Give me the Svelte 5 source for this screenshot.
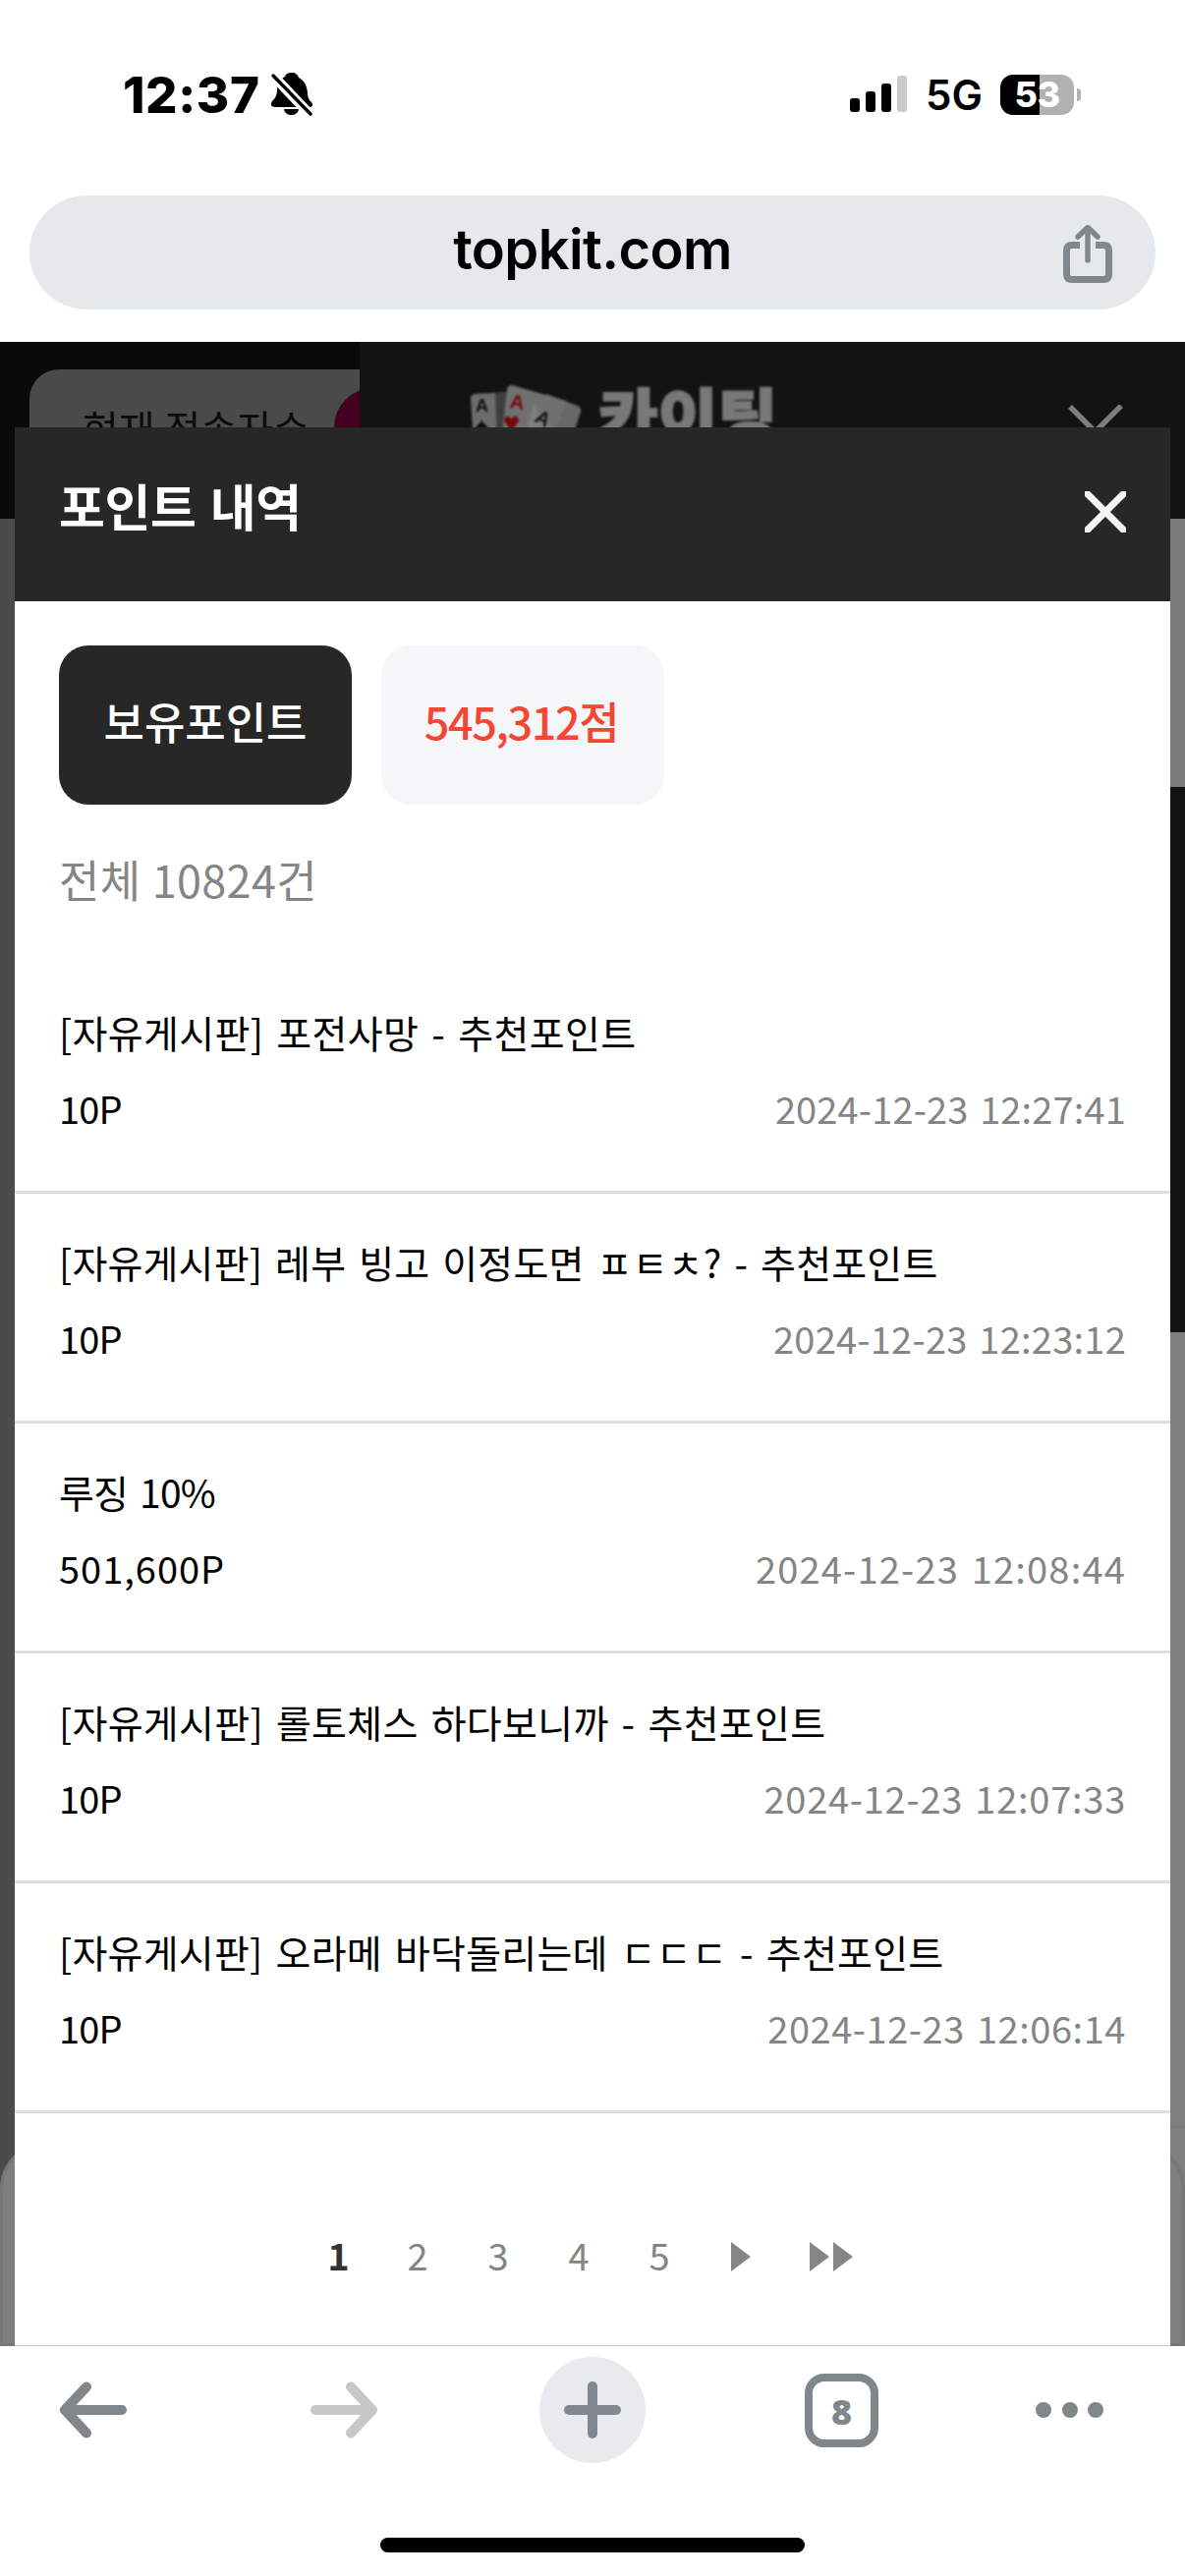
<script>
    let { total = 10824, held = 545312 } = $props();

    let rows = $state([
        { title: '[자유게시판] 포전사망 - 추천포인트', point: '10P', date: '2024-12-23 12:27:41', track: 0.35, pointTrack: -0.8, dateTrack: 0.15 },
        { title: '[자유게시판] 레부 빙고 이정도면 ㅍㅌㅊ? - 추천포인트', point: '10P', date: '2024-12-23 12:23:12', track: 0.2, pointTrack: -0.8, dateTrack: 0.25 },
        { title: '루징 10%', point: '501,600P', date: '2024-12-23 12:08:44', track: -0.8, pointTrack: 1, dateTrack: 1.2 },
        { title: '[자유게시판] 롤토체스 하다보니까 - 추천포인트', point: '10P', date: '2024-12-23 12:07:33', track: 0.3, pointTrack: -0.8, dateTrack: 0.75 },
        { title: '[자유게시판] 오라메 바닥돌리는데 ㄷㄷㄷ - 추천포인트', point: '10P', date: '2024-12-23 12:06:14', track: 0.25, pointTrack: -0.8, dateTrack: 0.55 }
    ]);

    let pages = [1, 2, 3, 4, 5];
    let currentPage = $state(1);
</script>

<div class="phone">
    <div class="status">
        <div class="status-left">
            <span class="clock">12:37</span>
            <svg class="bell" width="44" height="46" viewBox="0 0 44 46">
                <path d="M22 1c4 0 6 2 7 5 6 3 8 8 9 15 0 5 1 7 4 10 2 3 1 5-3 5H5c-4 0-5-3-3-6 4-4 5-7 5-12 1-7 4-11 8-13 1-3 3-4 7-4z" />
                <path d="M14 38h15c-1 8-14 8-15 0z" />
                <path d="M2 3l39 41" stroke="#fff" stroke-width="10" />
                <path d="M3 4l38 39" stroke="#000" stroke-width="3.4" stroke-linecap="round" />
            </svg>
        </div>
        <div class="status-right">
            <svg class="signal" width="58" height="38" viewBox="0 0 58 38">
                <rect x="0" y="23" width="10" height="14" rx="3" />
                <rect x="16" y="16" width="10" height="21" rx="3" />
                <rect x="32" y="8" width="10" height="29" rx="3" />
                <rect x="48" y="0" width="10" height="37" rx="3" fill="#cbcbcb" />
            </svg>
            <span class="network">5G</span>
            <div class="battery">53</div>
            <div class="battery-cap"></div>
        </div>
    </div>

    <div class="url-bar">
        <span>topkit.com</span>
        <svg class="share" width="50" height="60" viewBox="0 0 50 60" fill="none" stroke="#81888d" stroke-linecap="round">
            <path d="M17 20.500H9Q3.500 20.500 3.500 26V50Q3.500 55.500 9 55.500H41Q46.500 55.500 46.500 50V26Q46.500 20.500 41 20.500H33" stroke-width="7" stroke-linecap="butt" />
            <path d="M25 36V4M15 12L25 2.500 35 12" stroke-width="5.500" stroke-linejoin="round" />
        </svg>
    </div>

    <div class="page">
        <div class="backdrop">
            <div class="site-head">
                <div class="site-left">
                    <div class="visitors">현재 접속자수<i></i></div>
                </div>
                <div class="site-menu">
                    <svg class="cards" width="120" height="60" viewBox="0 0 120 60">
                        <path d="M3 15q0-3 4-4l32-2 4 51H6z" fill="#6c6c6c" />
                        <path d="M28 10l12-1v50H30z" fill="#3e3e3e" />
                        <path d="M80 11l32 12q4 2 3 6l-10 31H60z" fill="#686868" />
                        <path d="M40 6q1-4 5-4l55 16-14 42H34z" fill="#707070" />
                        <path d="M67 22l28 38H56z" fill="#7e7e7e" />
                        <text x="8" y="29" font-size="18" fill="#111">A</text>
                        <text x="7" y="53" font-size="27" fill="#111">♠</text>
                        <text x="43" y="26" font-size="20" fill="#740808" transform="rotate(8 50 20)">A</text>
                        <text x="36" y="50" font-size="29" fill="#740808">♥</text>
                        <text x="69" y="42" font-size="20" fill="#111" transform="rotate(28 75 36)">A</text>
                    </svg>
                    <span class="logo-text">카이팅</span>
                    <svg class="menu-close" width="56" height="56" viewBox="0 0 56 56" stroke="#7d7d7d" stroke-width="5.500">
                        <path d="M2 2l52 52M54 1L2 53" />
                    </svg>
                </div>
            </div>
            <div class="site-body">
                <div class="strip-left"><div class="card-left"></div></div>
                <div class="strip-right">
                    <div class="banner"></div>
                    <div class="rule"></div>
                    <div class="card-right"></div>
                </div>
            </div>
        </div>

        <div class="modal">
            <div class="modal-head">
                <h1>포인트 내역</h1>
                <svg width="42" height="42" viewBox="0 0 42 42" stroke="#f4f4f4" stroke-width="7">
                    <path d="M0 0l42 42M42 0L0 42" />
                </svg>
            </div>
            <div class="summary">
                <div class="held-label">보유포인트</div>
                <div class="held-value">{held.toLocaleString('en-US')}점</div>
            </div>
            <p class="total">전체 {total}건</p>

            <ul class="list">
                {#each rows as row}
                    <li>
                        <div class="title" style="letter-spacing: {row.track}px">{row.title}</div>
                        <div class="meta">
                            <span class="point" style="letter-spacing: {row.pointTrack}px">{row.point}</span>
                            <span class="date" style="letter-spacing: {row.dateTrack}px">{row.date}</span>
                        </div>
                    </li>
                {/each}
            </ul>

            <div class="pages">
                {#each pages as page}
                    <button class:active={page === currentPage} onclick={() => (currentPage = page)}>{page}</button>
                {/each}
                <svg class="next" width="21" height="30" viewBox="0 0 21 30"><path d="M1 0L21 15 1 30z" fill="#858585" /></svg>
                <svg class="last" width="44" height="30" viewBox="0 0 44 30"><path d="M0 0l20 15L0 30zM24 0l20 15-20 15z" fill="#858585" /></svg>
            </div>
        </div>
    </div>

    <div class="toolbar">
        <svg class="back" width="70" height="60" viewBox="0 0 70 60" stroke="#80868a">
            <path d="M64 30H7M28 6.500L6 30l22 23.500" />
        </svg>
        <svg class="forward" width="70" height="60" viewBox="0 0 70 60" stroke="#c8c8c8">
            <path d="M6 30h57M42 6.500L64 30 42 53.500" />
        </svg>
        <div class="plus">
            <svg width="60" height="60" viewBox="0 0 60 60" stroke="#81888f">
                <path d="M6 30h48M30 6v48" />
            </svg>
        </div>
        <div class="tabs">8</div>
        <div class="dots"><i></i><i></i><i></i></div>
    </div>
    <div class="home-indicator"></div>
</div>

<style>
    :global(body) {
        margin: 0;
        background: #fff;
    }

    .phone {
        display: flex;
        flex-direction: column;
        width: 1206px;
        height: 2622px;
        overflow: hidden;
        background: #fff;
        color: #000;
        font-family: 'Noto Sans CJK KR', 'Noto Sans', sans-serif;
    }

    .status {
        display: flex;
        justify-content: space-between;
        height: 118px;
        padding: 73px 106px 0 125px;
        box-sizing: border-box;
        margin-bottom: 81px;
        font-family: Inter, sans-serif;
    }

    .status-left,
    .status-right {
        display: flex;
        align-items: center;
        height: 46px;
    }

    .clock {
        width: 150px;
        font-size: 51px;
        font-weight: 800;
        letter-spacing: 0.6px;
        white-space: nowrap;
    }

    .network {
        width: 55px;
        margin: 1px 21px 0 19px;
        font-size: 42px;
        font-weight: 600;
        letter-spacing: 0;
    }

    .battery {
        width: 75px;
        height: 41px;
        border-radius: 13px;
        background: linear-gradient(to right, #000 40px, #b1b1b1 40px);
        color: #fff;
        font-size: 36px;
        font-weight: 800;
        letter-spacing: -0.5px;
        line-height: 41px;
        text-align: center;
    }

    .battery-cap {
        width: 4px;
        height: 13px;
        margin-left: 3px;
        border-radius: 0 5px 5px 0;
        background: #b1b1b1;
    }

    .url-bar {
        position: relative;
        height: 116px;
        margin: 0 30px 33px;
        border-radius: 58px;
        background: #e5e9ec;
        font-family: Inter, sans-serif;
        font-size: 56px;
        font-weight: 600;
        letter-spacing: -0.6px;
        line-height: 110px;
        text-align: center;
    }

    .share {
        position: absolute;
        right: 44px;
        top: 30px;
    }

    .page {
        display: grid;
        height: 2040px;
        overflow: hidden;
        flex-shrink: 0;
    }

    .backdrop,
    .modal {
        grid-area: 1 / 1;
        min-height: 0;
    }

    .backdrop {
        display: flex;
        flex-direction: column;
    }

    .site-head {
        display: flex;
        height: 180px;
    }

    .site-left {
        width: 366px;
        box-sizing: border-box;
        padding: 28px 0 0 30px;
        overflow: hidden;
        background: #0a0a0a;
    }

    .visitors {
        display: flex;
        align-items: center;
        width: 420px;
        height: 118px;
        box-sizing: border-box;
        padding-left: 54px;
        border-radius: 30px;
        background: #4a4a4a;
        color: #0b0b0b;
        font-size: 40px;
        line-height: 118px;
        word-spacing: 1px;
    }

    .visitors i {
        width: 80px;
        height: 80px;
        flex-shrink: 0;
        margin-left: 25px;
        border-radius: 50%;
        background: #430020;
    }

    .site-menu {
        display: flex;
        flex: 1;
        background: #131313;
    }

    .cards {
        margin: 42px 0 0 110px;
        font-family: 'Liberation Sans', 'DejaVu Sans', sans-serif;
        font-weight: 700;
        filter: blur(0.9px);
    }

    .logo-text {
        width: 350px;
        margin: 39px 0 0 13px;
        color: #787878;
        font-size: 66px;
        font-weight: 900;
        line-height: 70px;
        -webkit-text-stroke: 2px #787878;
        transform: scaleY(0.92);
        transform-origin: top;
        filter: blur(1.2px);
    }

    .menu-close {
        margin: 64px 0 0 128px;
    }

    .site-body {
        display: flex;
        justify-content: space-between;
        flex: 1;
    }

    .strip-left {
        display: flex;
        align-items: flex-end;
        width: 15px;
        overflow: hidden;
        background: #4b4b4b;
    }

    .card-left {
        width: 300px;
        height: 208px;
        box-sizing: border-box;
        flex-shrink: 0;
        border: 3px solid #767676;
        border-radius: 48px 0 0 0;
        background: #7f7f7f;
    }

    .strip-right {
        display: flex;
        flex-direction: column;
        align-items: flex-end;
        width: 15px;
        overflow: hidden;
        background: #7f7f7f;
    }

    .banner {
        width: 15px;
        height: 555px;
        border-top: 273px solid #7b7b7b;
        background: #131313;
    }

    .rule {
        width: 15px;
        height: 3px;
        margin: 807px 0 14px;
        background: #7a7a7a;
    }

    .card-right {
        width: 300px;
        flex: 1;
        box-sizing: border-box;
        border: 3px solid #767676;
        border-radius: 0 48px 0 0;
    }

    .modal {
        margin: 87px 15px 0;
        background: #fff;
        z-index: 1;
        border-bottom: 1px solid #c8c8c8;
    }

    .modal-head {
        display: flex;
        align-items: center;
        justify-content: space-between;
        height: 177px;
        padding: 0 45px 5px;
        box-sizing: border-box;
        background: #272727;
    }

    h1 {
        margin: 0 0 14px;
        color: #fff;
        font-size: 51px;
        font-weight: 600;
        letter-spacing: -0.4px;
        line-height: 60px;
        word-spacing: 3px;
    }

    .summary {
        display: flex;
        gap: 30px;
        padding: 45px 45px 0;
    }

    .held-label,
    .held-value {
        height: 162px;
        border-radius: 30px;
        font-size: 45px;
        font-weight: 500;
        line-height: 153px;
        text-align: center;
        white-space: nowrap;
    }

    .held-label {
        width: 298px;
        background: #272727;
        color: #fff;
    }

    .held-value {
        width: 288px;
        box-sizing: border-box;
        padding-right: 3px;
        background: #f4f6f8;
        color: #f44634;
        letter-spacing: -1.4px;
    }

    .total {
        margin: 46px 45px 56px;
        color: #858585;
        font-size: 45px;
        letter-spacing: 0.3px;
        line-height: 60px;
        word-spacing: 1px;
    }

    .list {
        margin: 0;
        padding: 0;
        list-style: none;
    }

    .list li {
        height: 234px;
        padding: 39px 45px 0;
        box-sizing: border-box;
        border-bottom: 3px solid #ddd;
    }

    .title {
        font-size: 39px;
        line-height: 60px;
        white-space: pre;
        word-spacing: 4px;
    }

    .meta {
        display: flex;
        justify-content: space-between;
        margin-top: 18px;
        font-size: 38px;
        line-height: 60px;
    }

    .date {
        color: #858585;
        word-spacing: 3px;
    }

    .pages {
        display: flex;
        align-items: center;
        height: 60px;
        margin: 116px 0 0 287px;
    }

    .pages button {
        width: 82px;
        padding: 0 0 4px;
        border: none;
        background: none;
        color: #858585;
        font: inherit;
        font-size: 38px;
        line-height: 60px;
        text-align: center;
    }

    .pages .active {
        padding-left: 3px;
        color: #333;
        font-weight: 700;
    }

    .next {
        margin-left: 31px;
    }

    .last {
        margin-left: 60px;
    }

    .toolbar {
        display: flex;
        align-items: center;
        height: 108px;
        margin-top: 11px;
        padding-left: 60px;
        flex-shrink: 0;
    }

    .toolbar svg {
        fill: none;
        stroke-width: 10;
        stroke-linecap: round;
        stroke-linejoin: round;
    }

    .forward {
        margin: 0 164px 0 185px;
    }

    .plus {
        display: flex;
        align-items: center;
        justify-content: center;
        width: 108px;
        height: 108px;
        border-radius: 50%;
        background: #e8eaee;
    }

    .tabs {
        width: 75px;
        height: 75px;
        box-sizing: border-box;
        margin: 0 160px 0 162px;
        border: 8px solid #80878b;
        border-radius: 20px;
        color: #80878b;
        font-family: 'Noto Sans', sans-serif;
        font-size: 36px;
        font-weight: 900;
        line-height: 62px;
        text-align: center;
    }

    .dots {
        display: flex;
        gap: 10.5px;
    }

    .dots i {
        width: 16px;
        height: 16px;
        border-radius: 50%;
        background: #80878b;
    }

    .home-indicator {
        width: 432px;
        height: 15px;
        margin: 76px auto 0;
        flex-shrink: 0;
        border-radius: 8px;
        background: #000;
    }
</style>
